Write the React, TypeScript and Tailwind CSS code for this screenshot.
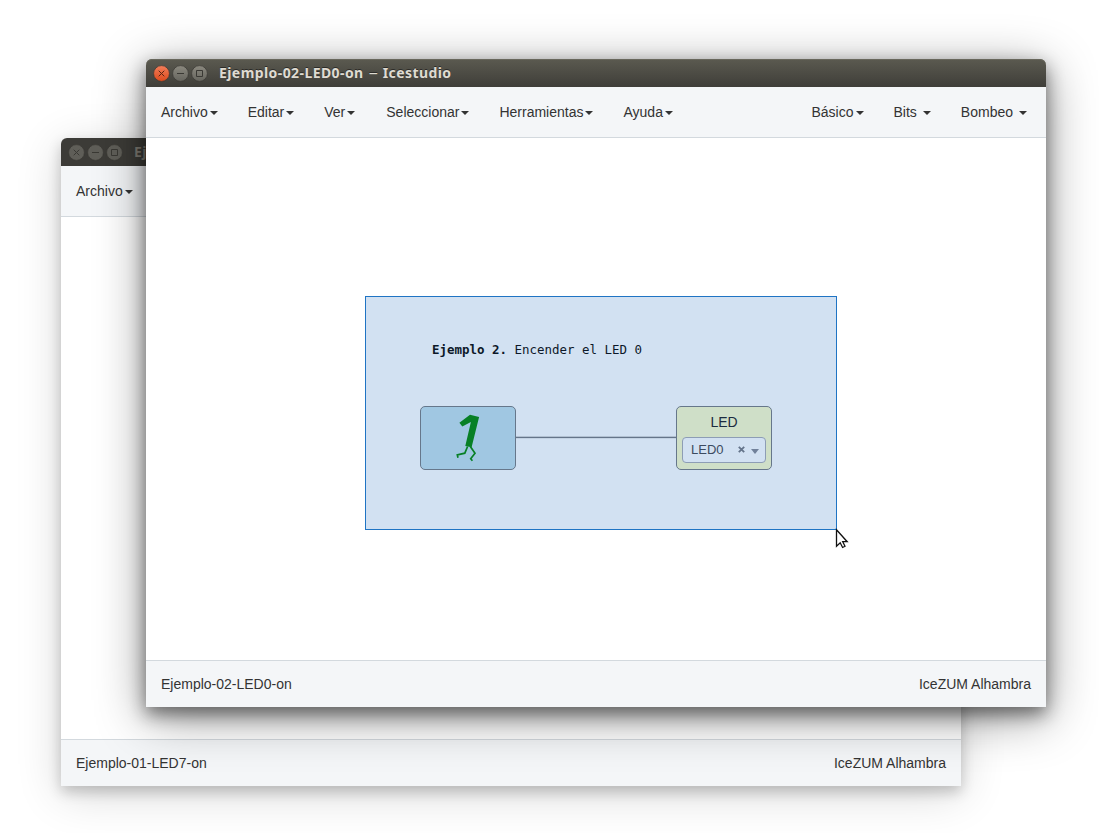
import type { ReactNode } from 'react';

function Caret({ className = 'ml-0.5' }: { className?: string }) {
  return (
    <svg className={`h-1 w-2 shrink-0 ${className}`} viewBox="0 0 8 4" fill="#333">
      <path d="M0 0h8L4 4z" />
    </svg>
  );
}

function MenuItem({ label, spaced = false }: { label: string; spaced?: boolean }) {
  return (
    <button className="flex items-center px-[15px] text-sm leading-5 whitespace-nowrap">
      {label}
      <Caret className={spaced ? 'mt-px ml-1.5' : 'mt-px ml-0.5'} />
    </button>
  );
}

function WindowButton({ kind, active }: { kind: 'close' | 'min' | 'max'; active: boolean }) {
  const red = kind === 'close' && active;
  const fill = red ? 'url(#btn-red)' : active ? 'url(#btn-gray)' : '#5f5e58';
  const ink = red ? '#5a2413' : '#3a3934';
  return (
    <svg className="size-[17px]" viewBox="0 0 17 17">
      <defs>
        <linearGradient id="btn-red" x2="0" y2="1">
          <stop offset="0" stopColor="#f37e5a" />
          <stop offset="1" stopColor="#dc4a1c" />
        </linearGradient>
        <linearGradient id="btn-gray" x2="0" y2="1">
          <stop offset="0" stopColor="#8b897f" />
          <stop offset="1" stopColor="#66655e" />
        </linearGradient>
      </defs>
      <circle cx="8.5" cy="8.5" r="7.9" fill={fill} stroke="#3a3833" strokeWidth=".7" />
      <g fill="none" stroke={ink} strokeWidth="1">
        {kind === 'close' && <path d="M5.7 5.7l5.6 5.6M11.3 5.7l-5.6 5.6" />}
        {kind === 'min' && <path d="M5 8.5h7" />}
        {kind === 'max' && <path d="M5.5 5.5h6v6h-6z" />}
      </g>
    </svg>
  );
}

function TitleBar({ title, active }: { title: string; active: boolean }) {
  return (
    <div
      className={`flex h-7 shrink-0 items-center rounded-t-md pl-[7px] ${
        active
          ? 'bg-linear-to-b from-[#5b5a50] to-[#3f3e39] shadow-[inset_0_1px_0_#68675c]'
          : 'bg-[#3c3b37]'
      }`}
    >
      <div className="flex gap-0.5">
        <WindowButton kind="close" active={active} />
        <WindowButton kind="min" active={active} />
        <WindowButton kind="max" active={active} />
      </div>
      <span
        className={`ml-[11px] font-['Noto_Sans',sans-serif] text-sm leading-7 font-bold tracking-[0.42px] whitespace-nowrap ${
          active ? 'text-[#dfdbd2] [text-shadow:0_-1px_0_#2c2b28]' : 'text-[#807d74]'
        }`}
      >
        {title} <span className="inline-block w-[11px] scale-x-130 text-center font-normal">–</span> Icestudio
      </span>
    </div>
  );
}

function AppWindow({
  name,
  active = false,
  className,
  children,
}: {
  name: string;
  active?: boolean;
  className: string;
  children?: ReactNode;
}) {
  return (
    <section className={`absolute flex h-[648px] w-[900px] flex-col rounded-t-md bg-white ${className}`}>
      <TitleBar title={name} active={active} />
      <nav className="flex h-[51px] shrink-0 justify-between border-b border-[#d3d9de] bg-[#f4f6f8]">
        <div className="flex">
          <MenuItem label="Archivo" />
          <MenuItem label="Editar" />
          <MenuItem label="Ver" />
          <div className="ml-px flex">
            <MenuItem label="Seleccionar" />
            <MenuItem label="Herramientas" />
            <MenuItem label="Ayuda" />
          </div>
        </div>
        <div className="flex pr-1">
          <MenuItem label="Básico" />
          <MenuItem label="Bits" spaced />
          <MenuItem label="Bombeo" spaced />
        </div>
      </nav>
      <main className="min-h-0 flex-1">{children}</main>
      <footer className="flex h-[47px] shrink-0 items-center justify-between border-t border-[#d3d9de] bg-[#f4f6f8] px-[15px] text-sm">
        <span>{name}</span>
        <span>IceZUM Alhambra</span>
      </footer>
    </section>
  );
}

function Diagram() {
  return (
    <div className="relative mt-[158px] ml-[219px] h-[234px] w-[472px] border border-[#1f74c4] bg-[#d2e1f2]">
      <p className="absolute top-[43px] left-[66px] font-['DejaVu_Sans_Mono',monospace] text-[12.46px] leading-5 whitespace-pre text-[#0c1829]">
        <b>Ejemplo 2.</b> Encender el LED 0
      </p>
      <div className="absolute top-[139px] left-[150px] h-[3px] w-[160px] border-y border-t-[#b1c0d1] border-b-[#c3d2e3] bg-[#65758a]" />
      <div className="absolute top-[109px] left-[54px] h-16 w-24 rounded-[5px] border border-[#66778b] bg-[#a0c7e2]">
        <svg className="h-[62px] w-[94px]" viewBox="11 7 94 62">
          <path
            fill="#078026"
            d="M60 14.7L69.1 17 61.6 47.2 55.3 46 60.9 22 52.3 26.6 49.4 22.8z"
          />
          <path
            fill="none"
            stroke="#078026"
            strokeWidth="1.7"
            d="M57.6 46.5L54.8 53.2 47.3 55 48 57.8M60.3 46.5L65 53.3 60.7 58.7 62.4 60.7"
          />
        </svg>
      </div>
      <div className="absolute top-[109px] left-[310px] flex h-16 w-24 flex-col rounded-[5px] border border-[#66778b] bg-[#cfdfc8] px-[5px] pt-[5px]">
        <span className="text-center text-sm leading-5 text-[#1b2b40]">LED</span>
        <div className="mt-[5px] flex h-[26px] items-center rounded border border-[#8d9db5] bg-[#d2e1f2] pr-1.5 pl-2 text-[13px] text-[#3c4b60]">
          <span className="flex-1">LED0</span>
          <svg className="mr-1.5 mb-0.5 size-[7px]" viewBox="0 0 7 7">
            <path d="M.8.8l5.4 5.4M6.2.8L.8 6.2" stroke="#64748a" strokeWidth="1.8" />
          </svg>
          <svg className="mt-[3px] h-[5px] w-2" viewBox="0 0 8 5" fill="#71819a">
            <path d="M0 0h8L4 5z" />
          </svg>
        </div>
      </div>
      <svg className="absolute top-[231px] left-[469px] h-[22px] w-[15px]" viewBox="0 0 15 22">
        <path
          d="M1.5 1.8v16.4l3.7-3.4 2.4 4.7 2.4-1.2-2.3-4.6h4.5z"
          fill="#fff"
          stroke="#111"
          strokeWidth="1.3"
        />
      </svg>
    </div>
  );
}

export default function App() {
  return (
    <div className="relative h-[833px] w-[1099px] overflow-hidden bg-white font-['Liberation_Sans',Arial,sans-serif] text-[#333]">
      <AppWindow
        name="Ejemplo-01-LED7-on"
        className="top-[138px] left-[61px] shadow-[0_6px_14px_rgba(0,0,0,0.2),0_8px_46px_rgba(0,0,0,0.16)]"
      />
      <AppWindow
        name="Ejemplo-02-LED0-on"
        active
        className="top-[59px] left-[146px] shadow-[0_7px_18px_rgba(0,0,0,0.48),0_10px_50px_rgba(0,0,0,0.42)]"
      >
        <Diagram />
      </AppWindow>
    </div>
  );
}
